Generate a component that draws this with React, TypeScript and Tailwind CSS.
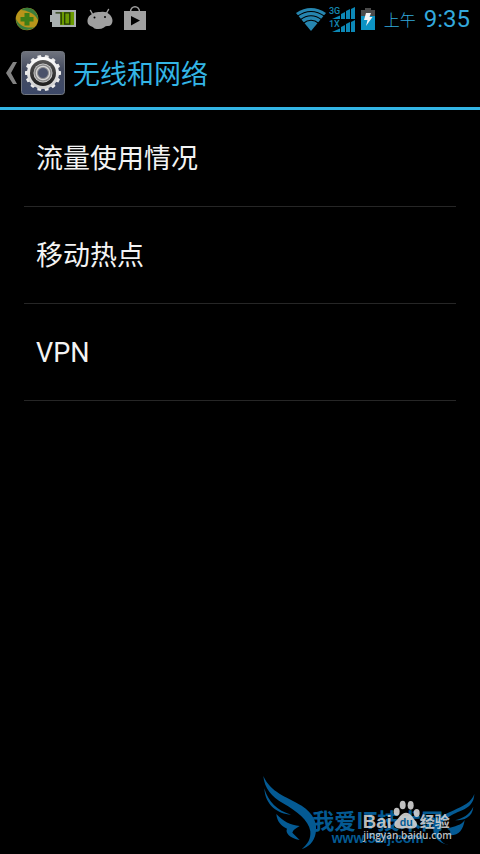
import React from 'react';

const items = ['流量使用情况', '移动热点', 'VPN'];

function SecurityIcon() {
  return (
    <svg width="24" height="24" viewBox="0 0 24 24" aria-hidden="true">
      <circle cx="12" cy="12" r="11.3" fill="#b8951a" />
      <path d="M6 3Q12 -1 18 2.500Q24 8 23 13Q20 7 14 5Q10 3 6 3Z" fill="#3a7d3c" />
      <path d="M1 12Q4 18 10 20Q16 21 20 20Q15 24 8 22.500Q1 19 1 12Z" fill="#3a7d3c" />
      <path d="M9.500 6h5v4h4v4.500h-4v4h-5v-4h-4V10h4z" fill="#3d7d16" />
    </svg>
  );
}

function BatteryLevelIcon() {
  return (
    <svg width="26" height="18" viewBox="0 0 26 18" aria-hidden="true">
      <path d="M2 0H26V17H2V12H0V5H2Z" fill="#a9b0b0" />
      <path d="M10 2H24V15H10Z" fill="#6b9b00" />
      <path d="M5.500 2.800H11.200V14.500M14.700 2.800H19.800V14.200H14.700Z" fill="none" stroke="#243808" strokeWidth="1.300" />
    </svg>
  );
}

function AndroidIcon() {
  return (
    <svg width="26" height="22" viewBox="0 0 26 22" aria-hidden="true">
      <path d="M3.500 2.500L6 7M21.500 1.500L19 6" stroke="#a0a0a0" strokeWidth="1.500" strokeLinecap="round" />
      <path d="M5 6Q8 3.500 13 4Q19 3 22 6Q25.500 9 25.500 13Q25 18 21 18Q18 17.500 17 19.500Q13 22 7.500 20.500Q6 18.500 3.500 18Q0 16.500 0.500 12Q1 8 5 6Z" fill="#a0a0a0" />
      <circle cx="7.500" cy="9.500" r="1" fill="#000" />
      <circle cx="18" cy="9" r="1" fill="#000" />
    </svg>
  );
}

function StoreIcon() {
  return (
    <svg width="22" height="24" viewBox="0 0 22 24" className="-mt-[2px]" aria-hidden="true">
      <path d="M6.500 6C6.500 -1 15.500 -1 15.500 6" fill="none" stroke="#a0a0a0" strokeWidth="1.500" />
      <path d="M0 5H22V24H0Z" fill="#a0a0a0" />
      <path d="M7 10L16 14.500L7 19.500Z" fill="#000" />
    </svg>
  );
}

function WifiIcon() {
  return (
    <svg width="30" height="24" viewBox="0 0 30 24" aria-hidden="true">
      <path d="M0 6Q15 -4 30 6L15 24Z" fill="#2686b0" />
      <path d="M1 9.500Q15 -0.500 29 9.500M4 13Q15 4.500 26 13M7 16.500Q15 10 23 16.500" fill="none" stroke="#000" strokeWidth="1.100" />
    </svg>
  );
}

function SignalIcon({ label }: { label: string }) {
  return (
    <svg width="27" height="13" viewBox="0 0 27 13" aria-hidden="true">
      <path d="M3 13L11 9.500V13ZM12 13V8L16 6V13ZM17 13V5L21 3V13ZM22 13V3L26 1V13Z" fill="#0c88b6" />
      <text x="0" y="8" fill="#1587b0" className="font-['Roboto'] text-[9px] font-medium">
        {label}
      </text>
    </svg>
  );
}

function ChargingIcon() {
  return (
    <svg width="14" height="22" viewBox="0 0 14 22" aria-hidden="true">
      <path d="M0 2H4V0H10V2H14V8H0Z" fill="#4b4b4b" />
      <path d="M0 8H14V22H0Z" fill="#0c93c4" />
      <path d="M5 5H10L8.500 9H11.500L5 18L6.500 12H3Z" fill="#f4f4f4" />
    </svg>
  );
}

function SettingsIcon() {
  const teeth = Array.from({ length: 14 }, (_, i) => (i * 360) / 14 + 13);
  return (
    <svg width="44" height="44" viewBox="0 0 44 44" aria-hidden="true">
      <defs>
        <linearGradient id="tile" x1="0" y1="0" x2="0" y2="1">
          <stop offset="0" stopColor="#70747e" />
          <stop offset="0.400" stopColor="#454c60" />
          <stop offset="1" stopColor="#3c4868" />
        </linearGradient>
        <linearGradient id="gear" x1="0" y1="0" x2="0" y2="1">
          <stop offset="0" stopColor="#ffffff" />
          <stop offset="1" stopColor="#cccccc" />
        </linearGradient>
        <linearGradient id="ring" x1="0" y1="0" x2="0" y2="1">
          <stop offset="0" stopColor="#555555" />
          <stop offset="1" stopColor="#1c1c1c" />
        </linearGradient>
      </defs>
      <rect x="0.500" y="0.500" width="43" height="43" rx="3" fill="url(#tile)" stroke="#737880" />
      {teeth.map((angle) => (
        <path key={angle} d="M19.500 8L20.300 4H23.700L24.500 8Z" fill="#ececec" transform={`rotate(${angle} 22 22)`} />
      ))}
      <circle cx="22" cy="22" r="16" fill="url(#gear)" />
      <circle cx="22" cy="22" r="13" fill="url(#ring)" />
      <circle cx="22" cy="22" r="9.500" fill="#d6d6d6" />
      <circle cx="22" cy="22" r="8" fill="none" stroke="#8b8b8b" strokeWidth="1.500" />
      <circle cx="22" cy="22" r="5.500" fill="#4a526a" stroke="#8f8f8f" />
    </svg>
  );
}

function StatusBar() {
  return (
    <div className="flex h-[38px] items-center justify-between pl-[15px] pr-[10px]">
      <div className="flex items-center gap-[11px]">
        <SecurityIcon />
        <BatteryLevelIcon />
        <AndroidIcon />
        <StoreIcon />
      </div>
      <div className="flex items-center text-[#33a9dc]">
        <WifiIcon />
        <div className="ml-[3px] flex flex-col">
          <SignalIcon label="3G" />
          <SignalIcon label="1X" />
        </div>
        <div className="ml-[5px]">
          <ChargingIcon />
        </div>
        <span className="ml-[9px] mt-[3px] text-[16px] font-light">上午</span>
        <span className="ml-[8px] text-[24px]">9:35</span>
      </div>
    </div>
  );
}

function Watermark() {
  return (
    <svg width="225" height="84" viewBox="0 0 675 252" aria-label="我爱IT技术网">
      <g fill="#045a93">
        <path d="M25 18C48 68 90 78 140 107C176 130 188 160 182 190C178 215 160 233 140 237C158 224 168 206 166 184C160 150 126 124 84 100C50 81 28 54 25 18Z" />
        <path d="M28 55C40 96 66 122 108 134C70 133 30 106 28 55Z" />
        <path d="M64 132C84 154 106 166 134 168C122 175 114 180 112 188L134 210C104 204 90 188 96 176C78 168 66 154 64 132Z" />
        <path d="M658 72C656 112 626 118 596 132C562 150 546 172 553 200C558 214 566 222 580 225C548 220 530 196 536 166C546 124 644 120 658 72Z" />
        <path d="M655 110C652 142 628 151 600 151C624 144 642 136 655 110Z" />
        <path d="M629 150C624 182 610 199 578 195C590 188 588 182 576 176C600 168 620 166 629 150Z" />
        <text x="172" y="177" className="font-['Noto_Sans_CJK_SC'] text-[66px] font-bold">我爱IT技术网</text>
        <text x="230" y="218" className="font-['Liberation_Sans'] text-[42px] font-bold">www.52ij.com</text>
      </g>
      <g fill="#d4d4d4" fillOpacity="0.900">
        <text x="323" y="174" className="font-['Liberation_Sans'] text-[56px] font-bold">Bai</text>
        <ellipse cx="425" cy="125" rx="9" ry="12" />
        <ellipse cx="443" cy="105" rx="9" ry="13" />
        <ellipse cx="467" cy="106" rx="9" ry="13" />
        <ellipse cx="485" cy="129" rx="9" ry="12" />
        <path d="M453 128C468 128 474 145 484 155C492 174 474 179 453 174C430 179 412 173 420 155C432 145 438 128 453 128Z" />
        <text x="494" y="170" className="font-['Noto_Sans_CJK_SC'] text-[45px] font-bold">经验</text>
        <text x="325" y="207" className="font-['Open_Sans'] text-[30px] font-semibold">jingyan.baidu.com</text>
      </g>
      <text x="434" y="169" fill="#045a93" className="font-['Liberation_Sans'] text-[32px] font-bold">du</text>
    </svg>
  );
}

export default function App() {
  return (
    <div className="flex min-h-screen flex-col bg-black font-['Roboto','Noto_Sans_CJK_SC',sans-serif]">
      <StatusBar />
      <header className="flex h-[72px] items-center border-b-[3px] border-[#33b5e5] pl-[6px]">
        <button type="button" aria-label="返回" className="flex items-center gap-[4px]">
          <svg width="11" height="22" viewBox="0 0 11 22" aria-hidden="true">
            <path d="M7 0H11L5 11L11 22H7L0 11Z" fill="#828282" />
          </svg>
          <SettingsIcon />
        </button>
        <h1 className="ml-[8px] pt-[5px] text-[27px] text-[#33b5e5]">无线和网络</h1>
      </header>
      <ul className="px-6">
        {items.map((item) => (
          <li key={item} className="border-b border-[#262626]">
            <button type="button" className="flex h-24 w-full items-center px-3 pt-[2px] text-left text-[27px] text-[#f3f3f3]">
              {item}
            </button>
          </li>
        ))}
      </ul>
      <footer className="mt-auto flex justify-end">
        <Watermark />
      </footer>
    </div>
  );
}
